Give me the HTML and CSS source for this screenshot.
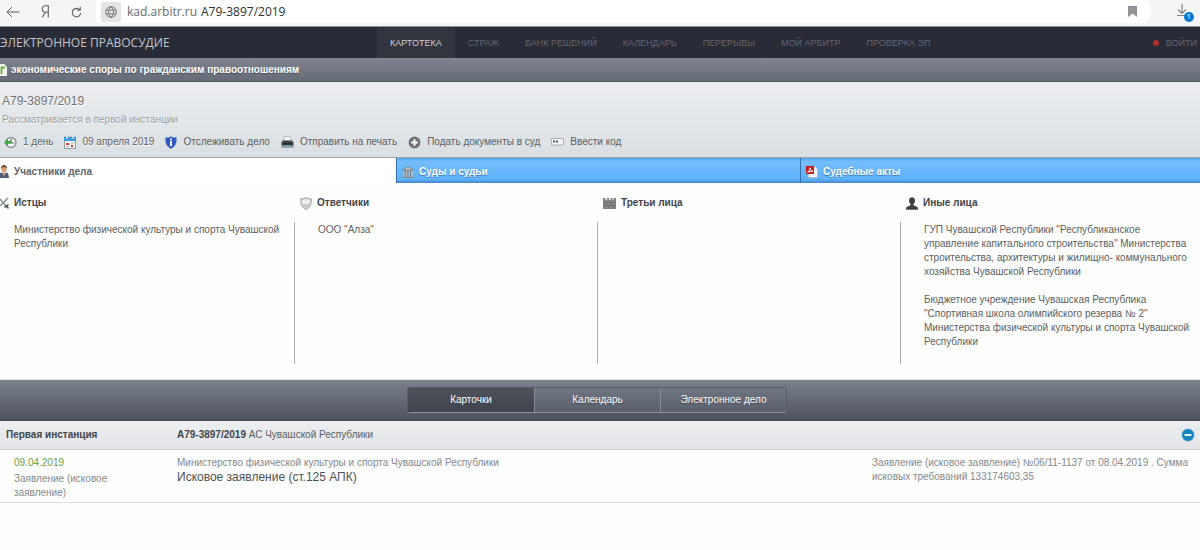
FILE: index.html
```html
<!DOCTYPE html>
<html lang="ru">
<head>
<meta charset="utf-8">
<title>А79-3897/2019</title>
<link rel="stylesheet" href="styles.css">
</head>
<body>
<div class="browser">
  <div class="browser-nav">
    <button class="icon-btn" type="button" aria-label="Назад"><svg width="14" height="12" viewBox="0 0 14 12" fill="none" stroke="#5c5f63"><path d="M13.500 6H1M6 1L1 6l5 5"/></svg></button>
    <button class="icon-btn" type="button" aria-label="Яндекс"><svg width="9" height="13" viewBox="0 0 9 13" fill="none" stroke="#5c5f63" stroke-width="1.100"><path d="M7.300 12.500V.7H4.500C2.500.7 1.300 2 1.300 4s1.200 3.200 3.200 3.200h2.800M4.500 7.200L1.200 12.500"/></svg></button>
    <button class="icon-btn" type="button" aria-label="Обновить"><svg width="11" height="12" viewBox="0 0 11 12" fill="none" stroke="#5c5f63" stroke-width="1.100"><path d="M8.800 4A4.200 4.200 0 1 0 9.700 7M9.200.8v3.400H5.800"/></svg></button>
  </div>
  <div class="address">
    <span class="globe"><svg width="14" height="14" viewBox="0 0 14 14" fill="none" stroke="#77797c"><circle cx="7" cy="7" r="5.300"/><path d="M7 1.700C3.500 5 3.500 9 7 12.300M7 1.700c3.500 3.300 3.500 7.300 0 10.600M2 5.200h10M2 8.900h10"/></svg></span>
    <label class="domain" for="url">kad.arbitr.ru</label>
    <input class="url" id="url" type="text" value="А79-3897/2019">
    <svg class="bookmark" width="9" height="11" viewBox="0 0 9 11"><path fill="#8f9194" d="M0 0h9v11L4.500 7.500 0 11z"/></svg>
  </div>
  <svg class="edge" width="8" height="23" viewBox="0 0 8 23"><path fill="#fff" d="M0 0h3l4 11-6 12H0z"/></svg>
  <button class="icon-btn download" type="button" aria-label="Загрузки"><svg width="18" height="18" viewBox="0 0 18 18"><path fill="none" stroke="#808387" stroke-width="1.200" d="M5 0v9.500M1 5.500l4 4 4-4M0 11.500h8"/><circle cx="12" cy="13" r="5" fill="#0879d0"/></svg><span class="badge">1</span></button>
</div>

<header class="topbar">
  <a class="brand" href="#">ЭЛЕКТРОННОЕ ПРАВОСУДИЕ</a>
  <nav class="menu">
    <a class="menu-link active" href="#">КАРТОТЕКА</a>
    <a class="menu-link" href="#">СТРАЖ</a>
    <a class="menu-link" href="#">БАНК РЕШЕНИЙ</a>
    <a class="menu-link" href="#">КАЛЕНДАРЬ</a>
    <a class="menu-link" href="#">ПЕРЕРЫВЫ</a>
    <a class="menu-link" href="#">МОЙ АРБИТР</a>
    <a class="menu-link" href="#">ПРОВЕРКА ЭП</a>
  </nav>
  <a class="login" href="#"><span class="dot"></span>ВОЙТИ</a>
</header>

<div class="category"><svg width="7" height="12" viewBox="0 0 7 12"><path fill="#f5f7f3" d="M0 0h4l3 3v9H0z"/><path fill="none" stroke="#5fae32" stroke-width="1.800" d="M1.500 10V3.500H5"/></svg><h2 class="category-name">экономические споры по гражданским правоотношениям</h2></div>

<section class="info">
  <h1 class="case-number">А79-3897/2019</h1>
  <p class="case-state">Рассматривается в первой инстанции</p>
  <div class="actions">
    <span class="action"><svg width="13" height="13" viewBox="0 0 13 13"><circle cx="7" cy="6.500" r="5" fill="#f4f6f5" stroke="#8b9093" stroke-width="1.400"/><path d="M7 3v4h3.500" fill="none" stroke="#5e6467" stroke-width="1.200"/><path d="M0 6.500l4-4v2.600h3v2.600H4v2.600z" fill="#3cab3b"/></svg>1 день</span>
    <span class="action"><svg width="12" height="13" viewBox="0 0 12 13"><rect x=".5" y="1" width="11" height="11.500" fill="#f3f4f6" stroke="#959da5"/><path fill="#3a9bd8" d="M0 1h12v4H0z"/><path stroke="#fff" d="M3 0v3M9 0v3"/><path fill="#d8402c" d="M2 7h3v2H2zM7 9h2v2H7z"/><path fill="#aab2ba" d="M7 6.500h3v1H7zM2 10h3v1H2z"/></svg>09 апреля 2019</span>
    <button class="action" type="button"><svg width="12" height="13" viewBox="0 0 12 13"><path fill="#2858c4" stroke="#8193bd" stroke-width=".6" d="M6 .4C4.500 1.600 2.500 1.800.6 1.500.3 6 1 10.500 6 12.600c5-2.100 5.700-6.600 5.400-11.100C9.500 1.800 7.500 1.600 6 .4z"/><path fill="#fff" d="M5 2.500h2v1.700H5zM5 5h2v5H5z"/></svg>Отслеживать дело</button>
    <button class="action" type="button"><svg width="13" height="13" viewBox="0 0 13 13"><path fill="#f2f5f7" stroke="#a3a9ad" stroke-width=".7" d="M3 .5h6L10.500 5h-8z"/><path fill="#41464a" d="M2 4.500h9l1.500 2V10h-12V6.500z"/><path fill="#23272a" d="M2.500 7h8v1.500h-8z"/><path fill="#9ea4a8" d="M.5 9.500h12v2.500H.5z"/><path fill="#79aebc" d="M3 9.500h7V11H3z"/></svg>Отправить на печать</button>
    <button class="action" type="button"><svg width="13" height="13" viewBox="0 0 13 13"><circle cx="6.500" cy="6.500" r="5.900" fill="#707275"/><path stroke="#fff" stroke-width="2" d="M6.500 3.200v6.600M3.200 6.500h6.600"/></svg>Подать документы в суд</button>
    <button class="action" type="button"><svg width="13" height="8" viewBox="0 0 13 8"><path fill="#f4f4f4" stroke="#adb0b3" d="M.5.5h12v6.500H.5z"/><path fill="#555" d="M2 2.500h2v2H2zM5 2.500h2v2H5z"/></svg>Ввести код</button>
  </div>
</section>

<div class="tabs">
  <button class="tab current" type="button"><svg width="9" height="13" viewBox="0 0 9 13"><path fill="#4b5b78" d="M0 8l3-1 5 1 1 5H0z"/><path fill="#f2f2f2" d="M2 7h4l-2 5z"/><path fill="#a64a32" d="M3.500 8h1v4h-1z"/><ellipse cx="4" cy="4.300" rx="2.600" ry="3.500" fill="#d9a374"/><path fill="#6d452d" d="M1 4C.8 1 2.500 0 4 0s3.300 1 3 4L6 2.300H2.500z"/></svg>Участники дела</button>
  <button class="tab" type="button"><svg width="12" height="12" viewBox="0 0 12 12"><path fill="#c3c6c7" stroke="#6c7377" stroke-width=".7" d="M6 .5L11.500 4h-11z"/><path fill="#8b8f91" d="M1 4h10v1H1zM.5 10.500h11V12H.5z"/><path stroke="#c3c6c7" stroke-width="1.500" d="M2 5v5.500M4.700 5v5.500M7.300 5v5.500M10 5v5.500"/><path stroke="#5e676c" stroke-width=".8" d="M3.200 5v5.500M5.900 5v5.500M8.500 5v5.500"/></svg>Суды и судьи</button>
  <button class="tab" type="button"><svg width="12" height="12" viewBox="0 0 12 12"><path fill="#f6f6f6" stroke="#a9b2bb" stroke-width=".7" d="M2.500.5h6.500L11.500 3v8.500h-9z"/><path fill="#c91b1e" d="M0 0h8v8H0z"/><path fill="none" stroke="#fff" d="M1.300 6.500C3 5.500 4 4 4 1.800c.3 2 1.200 3.300 3 3.500-2-.3-3.800 0-5.700 1.200z"/></svg>Судебные акты</button>
</div>

<section class="parties">
  <div class="party"><h3 class="party-title"><svg width="9" height="12" viewBox="0 0 9 12"><path fill="none" stroke="#8e9192" stroke-width="1.500" d="M0 2l7 8M8 1L0 9"/><path fill="none" stroke="#45484a" stroke-width="1.500" d="M4.500 10.500l4-3M6.500 9l2 2.500"/></svg>Истцы</h3><div class="party-body"><p>Министерство физической культуры и спорта Чувашской Республики</p></div></div>
  <div class="party"><h3 class="party-title"><svg width="12" height="13" viewBox="0 0 12 13"><path fill="#c9caca" stroke="#9b9d9e" stroke-width=".8" d="M6 .5C4.500 1.500 2.500 2 .7 1.800.5 6 1.200 10.500 6 12.500c4.800-2 5.500-6.500 5.300-10.700C9.500 2 7.500 1.500 6 .5z"/><path fill="#eee" d="M6 2c-1.300.8-2.600 1.100-4 1.100v3.500c2.500 1 5.500 1 8 0V3.100c-1.400 0-2.700-.3-4-1.100z"/></svg>Ответчики</h3><div class="party-body"><p>ООО "Алза"</p></div></div>
  <div class="party"><h3 class="party-title"><svg width="13" height="11" viewBox="0 0 13 11"><path fill="#858585" d="M0 0h2.500v2H4V0h2v2h1.500V0h2v2h1V0H13v11H0z"/><path stroke="#696969" stroke-width=".8" d="M0 4.500h13M0 7.500h13M3 4.500v3M8 4.500v3M5.500 7.500V11M11 7.500V11"/></svg>Третьи лица</h3><div class="party-body"></div></div>
  <div class="party"><h3 class="party-title"><svg width="12" height="13" viewBox="0 0 12 13"><path fill="#414141" d="M6 .3c2 0 3 1.300 3 3.200C9 5 8.500 6 7.500 7v1.200l3.500 1.500c.8.400 1 1.500 1 3H0c0-1.500.2-2.600 1-3l3.500-1.500V7C3.500 6 3 5 3 3.500 3 1.600 4 .3 6 .3z"/></svg>Иные лица</h3><div class="party-body"><p>ГУП Чувашской Республики "Республиканское управление капитального строительства" Министерства строительства, архитектуры и жилищно- коммунального хозяйства Чувашской Республики</p><p>Бюджетное учреждение Чувашская Республика "Спортивная школа олимпийского резерва № 2" Министерства физической культуры и спорта Чувашской Республики</p></div></div>
</section>

<div class="views">
  <div class="switch">
    <button class="view pressed" type="button">Карточки</button>
    <button class="view" type="button">Календарь</button>
    <button class="view" type="button">Электронное дело</button>
  </div>
</div>

<section class="chrono">
  <div class="row row-head">
    <h3 class="instance">Первая инстанция</h3>
    <div><a class="case-link" href="#">А79-3897/2019</a> АС Чувашской Республики</div>
    <button class="collapse" type="button" aria-label="Свернуть"><svg width="14" height="14" viewBox="0 0 14 14"><circle cx="7" cy="7" r="6.500" fill="#1685bd" stroke="#c4dce9"/><path fill="#e6f6ff" d="M3.500 6h7v2h-7z"/></svg></button>
  </div>
  <div class="row row-doc">
    <div class="doc-kind"><time class="date">09.04.2019</time><p>Заявление (исковое заявление)</p></div>
    <div><p>Министерство физической культуры и спорта Чувашской Республики</p><a class="doc-title" href="#">Исковое заявление (ст.125 АПК)</a></div>
    <p class="doc-note">Заявление (исковое заявление) №06/11-1137 от 08.04.2019 . Сумма исковых требований 133174603,35</p>
  </div>
</section>
</body>
</html>
```

FILE: styles.css
```css
* { box-sizing: border-box; }
body { margin: 0; background: #fefefe; color: #5b5e62; font: 10px/14px "Liberation Sans", Arial, sans-serif; }
h1, h2, h3, p { margin: 0; font-size: inherit; }
a { color: inherit; text-decoration: none; }
button { margin: 0; padding: 0; border: 0; background: none; color: inherit; font: inherit; cursor: pointer; }
svg { display: block; flex: none; }

.browser { display: flex; height: 27px; padding-bottom: 3px; background: #f3f5f6; border-bottom: 1px solid #8e9297; }
.browser-nav { display: flex; align-items: center; gap: 21px; width: 96px; padding-left: 6px; flex: none; }
.address { display: flex; flex: 1; align-items: center; padding: 0 8px 0 5px; background: #fff; border-radius: 3px 0 0 3px; font: 12px/16px "Open Sans", "Noto Sans", sans-serif; }
.globe { padding: 3px; background: #e4e4e4; border-radius: 2px; }
.domain { margin-left: 6px; color: #66696c; }
.url { flex: 1; margin-left: 4px; padding: 0; border: 0; outline: 0; background: none; color: #2d2f31; font: inherit; }
.download { position: relative; margin: 3px 5px 0 24px; }
.badge { position: absolute; right: 4px; bottom: 2px; color: #fff; font: 8px/10px "Open Sans", sans-serif; }

.topbar { display: flex; height: 31px; align-items: center; background: #292b37; }
.brand { width: 377px; flex: none; color: #c5c6ca; font: 12px/16px "Open Sans", "Noto Sans", sans-serif; }
.menu { display: flex; flex: 1; align-self: stretch; }
.menu-link { display: flex; align-items: center; padding: 0 13px; color: #62656f; font-size: 9px; }
.active { background: #32343e; color: #cfd0d2; }
.login { display: flex; align-items: center; gap: 7px; padding-right: 3px; color: #62656f; font-size: 9px; }
.dot { width: 6px; height: 6px; border-radius: 50%; background: #ad302c; }

.category { display: flex; align-items: center; gap: 4px; height: 24px; padding-top: 1px; background: linear-gradient(#7f8490, #656b77); border-bottom: 1px solid #555b66; color: #fff; text-shadow: 0 1px 1px #4a4e58; }

.info { padding: 11px 2px 8px; background: linear-gradient(#eceef0, #dadfe3); border-bottom: 1px solid #9da1a5; text-shadow: 0 1px #fff; }
.case-number { color: #6f7174; font-weight: normal; font-size: 12px; line-height: 16px; }
.case-state { margin-top: 4px; color: #9b9da0; }
.actions { display: flex; gap: 11px; margin-top: 8px; padding-left: 2px; }
.action { display: flex; align-items: center; gap: 6px; }

.tabs { display: grid; grid-template-columns: 396fr 404fr 400fr; height: 25px; }
.tab { display: flex; align-items: center; gap: 5px; padding: 2px 0 0 5px; background: linear-gradient(#5aa7ef, #73bdff 15%, #60b2fb 85%, #4386cc); border-left: 1px solid #3170ad; color: #fff; font-weight: bold; text-shadow: 0 1px 1px #3976b6; }
.current { padding-left: 0; background: #fff; border: 0; color: #5d6570; text-shadow: none; }

.parties { display: grid; grid-template-columns: 294fr 303fr 303fr 300fr; padding: 13px 0 15px; border-bottom: 1px solid #e1e6ea; }
.party { display: flex; flex-direction: column; }
.party-title { display: flex; align-items: center; gap: 5px; padding-left: 6px; color: #3f444b; }
.party:first-child .party-title { padding-left: 0; }
.party-body { flex: 1; min-height: 142px; margin-top: 12px; padding: 1px 8px 14px 23px; border-left: 1px solid #a9abad; }
.party:first-child .party-body { padding-left: 14px; border: 0; }
.party-body p + p { margin-top: 14px; }

.views { display: flex; justify-content: center; padding: 7px 6px 7px 0; background: linear-gradient(#7c828d, #4d525d); border-bottom: 1px solid #42464f; }
.switch { display: grid; grid-template-columns: repeat(3, 1fr); width: 380px; border: 1px solid #565c68; border-bottom-color: #888d98; border-radius: 3px; }
.view { padding: 5px 0; border-left: 1px solid #868b96; background: linear-gradient(#707582, #5b606d); color: #fff; text-shadow: 0 1px 1px #40444e; }
.pressed { border: 0; background: linear-gradient(#4e525b, #40434c); }

.row { display: grid; grid-template-columns: 177px 1fr 328px; }
.row-head { align-items: center; padding: 7px 0; background: linear-gradient(#edeef0, #e3e5e8); border-bottom: 1px solid #cfd1d3; }
.instance { padding-left: 6px; color: #3f444b; }
.case-link { color: #3f444b; font-weight: bold; }
.collapse { justify-self: end; margin-right: 5px; }
.row-doc { padding: 6px 0 2px; border-bottom: 1px solid #dcdedf; color: #85888c; }
.doc-kind { padding: 0 50px 0 14px; }
.date { display: block; margin-bottom: 2px; color: #6ba23d; }
.doc-title { color: #4d5055; font-size: 12px; }
.doc-note { padding-right: 8px; }
```
